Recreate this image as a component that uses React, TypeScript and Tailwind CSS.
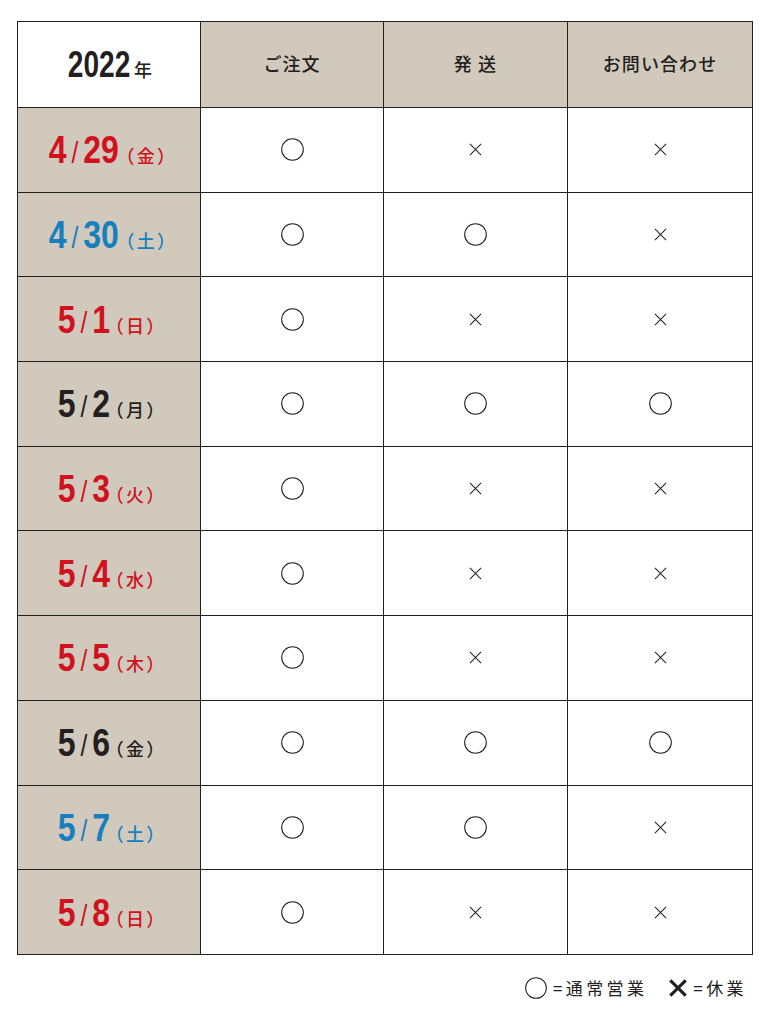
import React from 'react';

type Mark = 'o' | 'x';

const rows: { m: string; d: string; w: string; c: string; v: Mark[] }[] = [
  { m: '4', d: '29', w: '金', c: 'text-[#d0111e]', v: ['o', 'x', 'x'] },
  { m: '4', d: '30', w: '土', c: 'text-[#167fbe]', v: ['o', 'o', 'x'] },
  { m: '5', d: '1', w: '日', c: 'text-[#d0111e]', v: ['o', 'x', 'x'] },
  { m: '5', d: '2', w: '月', c: 'text-[#231f20]', v: ['o', 'o', 'o'] },
  { m: '5', d: '3', w: '火', c: 'text-[#d0111e]', v: ['o', 'x', 'x'] },
  { m: '5', d: '4', w: '水', c: 'text-[#d0111e]', v: ['o', 'x', 'x'] },
  { m: '5', d: '5', w: '木', c: 'text-[#d0111e]', v: ['o', 'x', 'x'] },
  { m: '5', d: '6', w: '金', c: 'text-[#231f20]', v: ['o', 'o', 'o'] },
  { m: '5', d: '7', w: '土', c: 'text-[#167fbe]', v: ['o', 'o', 'x'] },
  { m: '5', d: '8', w: '日', c: 'text-[#d0111e]', v: ['o', 'x', 'x'] },
];

const jp = "font-['Noto_Sans_CJK_JP',sans-serif]";
const num = "font-['Liberation_Sans',sans-serif]";

function Circle({ size = 23 }: { size?: number }) {
  return (
    <svg width={size} height={size} viewBox="0 0 24 24">
      <circle cx="12" cy="12" r="11.3" fill="none" stroke="#231f20" strokeWidth="1.1" />
    </svg>
  );
}

function Cross({ size = 13, w = 1.1 }: { size?: number; w?: number }) {
  return (
    <svg width={size} height={size} viewBox="0 0 14 14">
      <path d="M1 1L13 13M13 1L1 13" stroke="#231f20" strokeWidth={w} fill="none" />
    </svg>
  );
}

const cell = 'border-r border-b border-[#231f20] flex items-center justify-center';

export default function App() {
  return (
    <div className="w-[770px] h-[1020px] bg-white pt-[21px] pl-[17px]">
      <div className="grid grid-cols-[183px_183px_184px_185px] border-l border-t border-[#231f20] w-[736px]">
        <div className={`${cell} h-[86px] bg-white`}>
          <div className="flex items-baseline">
            <span className={`${num} font-bold text-[36px] leading-none text-[#231f20] inline-block scale-x-[0.78] -mx-[7px]`}>2022</span>
            <span className={`${jp} font-medium text-[18px] leading-none text-[#231f20] ml-[2px]`}>年</span>
          </div>
        </div>
        {['ご注文', '発 送', 'お問い合わせ'].map((h) => (
          <div key={h} className={`${cell} h-[86px] bg-[#d2c9bd]`}>
            <span className={`${jp} font-medium text-[18px] tracking-[0.06em] text-[#231f20] pb-[2px]`}>{h}</span>
          </div>
        ))}
        {rows.map((r, i) => (
          <React.Fragment key={i}>
            <div className={`${cell} h-[84.7px] bg-[#d2c9bd] ${r.c}`}>
              <div className="flex items-baseline">
                <span className={`${num} font-bold text-[39px] leading-none inline-flex items-baseline scale-x-[0.82] -mx-[7px]`}>
                  <span>{r.m}</span>
                  <span className="font-normal text-[30px] mx-[6px]">/</span>
                  <span>{r.d}</span>
                </span>
                <span className={`${jp} font-medium text-[18px] leading-none ml-[5px] tracking-[0.16em] [font-feature-settings:'palt']`}>（{r.w}）</span>
              </div>
            </div>
            {r.v.map((v, j) => (
              <div key={j} className={`${cell} h-[84.7px] bg-white`}>
                {v === 'o' ? <Circle /> : <Cross />}
              </div>
            ))}
          </React.Fragment>
        ))}
      </div>
      <div className={`flex items-center justify-end w-[736px] mt-[20px] pr-[10px] ${jp} text-[17px] text-[#231f20] tracking-[0.2em]`}>
        <Circle size={22} />
        <span className="ml-[6px]">=通常営業</span>
        <span className="ml-[22px]"><Cross size={18} w={2.4} /></span>
        <span className="ml-[6px] -mr-[4px]">=休業</span>
      </div>
    </div>
  );
}
